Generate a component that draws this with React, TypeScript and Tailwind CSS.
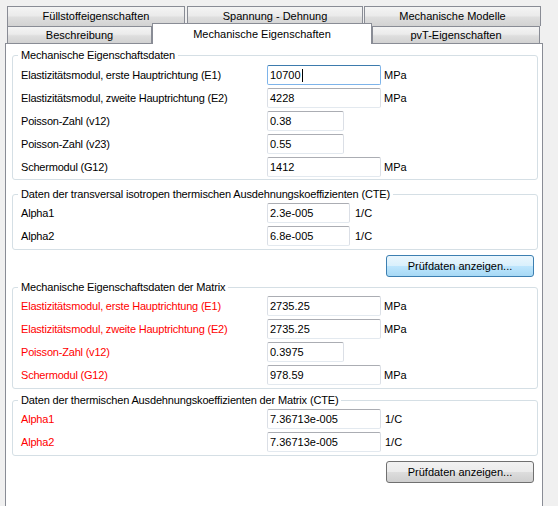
import React from 'react';

const tabBg =
  'bg-[linear-gradient(to_bottom,#f4f4f4,#ebebeb_45%,#dedede_55%,#d2d2d2)]';

function Tab({ label, className }: { label: string; className: string }) {
  return (
    <div
      className={`flex items-center justify-center border border-[#898c95] ${tabBg} ${className}`}
    >
      {label}
    </div>
  );
}

interface RowProps {
  label: string;
  value: string;
  unit?: string;
  inputW: string;
  unitGap?: string;
  red?: boolean;
  focused?: boolean;
}

function Row({ label, value, unit, inputW, unitGap = 'ml-[3px]', red, focused }: RowProps) {
  return (
    <div className="flex h-[20px] items-center">
      <div className={`w-[246px] shrink-0 tracking-[-0.2px] ${red ? 'text-[#ff0000]' : 'text-black'}`}>
        {label}
      </div>
      <div
        className={`flex h-[20px] ${inputW} items-center rounded-[2px] border bg-white pl-[2px] ${
          focused
            ? 'border-[#7eb4ea] border-t-[#3d7bad]'
            : 'border-[#dbdfe6] border-t-[#abadb3] border-b-[#e3e9ef]'
        }`}
      >
        <span>{value}</span>
        {focused && <span className="ml-[1px] h-[13px] w-px bg-black" />}
      </div>
      {unit && <div className={unitGap}>{unit}</div>}
    </div>
  );
}

function Group({
  title,
  children,
  className = '',
  pt = 'pt-[2px]',
  pb = 'pb-[3px]',
}: {
  title: string;
  children: React.ReactNode;
  className?: string;
  pt?: string;
  pb?: string;
}) {
  return (
    <fieldset className={`rounded-[3px] border border-[#d5dfe5] ${className}`}>
      <legend className="ml-[5px] px-[3px] leading-[13px] tracking-[-0.15px]">{title}</legend>
      <div className={`flex flex-col gap-[3px] pl-[8px] ${pb} ${pt}`}>{children}</div>
    </fieldset>
  );
}

function Button({ primary }: { primary?: boolean }) {
  return (
    <div
      className={`mr-[4px] flex h-[22px] w-[148px] items-center justify-center self-end rounded-[3px] border ${
        primary
          ? 'border-[#3c7fb1] bg-[linear-gradient(to_bottom,#eaf6fd,#d9f0fc_50%,#bee6fd_50%,#a7d9f5)]'
          : 'border-[#707070] bg-[linear-gradient(to_bottom,#f2f2f2,#ebebeb_50%,#dddddd_50%,#cfcfcf)]'
      }`}
    >
      Prüfdaten anzeigen...
    </div>
  );
}

export default function App() {
  return (
    <div className="h-[506px] w-[558px] overflow-hidden bg-[#f0f0f0] font-['Liberation_Sans',Arial,sans-serif] text-[11px] text-black">
      {/* tab strip, back row */}
      <div className="mt-[6px] flex h-[20px] pl-[7px]">
        <Tab label="Füllstoffeigenschaften" className="w-[178px] border-b-0" />
        <Tab label="Spannung - Dehnung" className="ml-[2px] w-[176px] border-b-0" />
        <Tab label="Mechanische Modelle" className="ml-[1px] w-[177px] border-b-0" />
      </div>
      {/* tab strip, front row */}
      <div className="flex h-[17px] items-end pl-[7px]">
        <Tab label="Beschreibung" className="h-[17px] w-[145px] border-b-0" />
        <div className="relative z-10 mb-[-1px] flex h-[21px] w-[220px] items-start justify-center border border-b-0 border-[#898c95] bg-white pt-[2px]">
          Mechanische Eigenschaften
        </div>
        <Tab label="pvT-Eigenschaften" className="h-[17px] w-[168px] border-b-0" />
      </div>

      {/* tab page */}
      <div className="ml-[5px] h-[470px] w-[538px] border border-[#898c95] bg-white pl-[6px] pr-[4px] pt-[5px]">
        <div className="flex flex-col">
          <Group title="Mechanische Eigenschaftsdaten" pt="pt-[3px]" pb="pb-[2px]">
            <Row label="Elastizitätsmodul, erste Hauptrichtung (E1)" value="10700" unit="MPa" inputW="w-[114px]" focused />
            <Row label="Elastizitätsmodul, zweite Hauptrichtung (E2)" value="4228" unit="MPa" inputW="w-[114px]" />
            <Row label="Poisson-Zahl (v12)" value="0.38" inputW="w-[77px]" />
            <Row label="Poisson-Zahl (v23)" value="0.55" inputW="w-[77px]" />
            <Row label="Schermodul (G12)" value="1412" unit="MPa" inputW="w-[114px]" />
          </Group>

          <Group title="Daten der transversal isotropen thermischen Ausdehnungskoeffizienten (CTE)" className="mt-[8px]">
            <Row label="Alpha1" value="2.3e-005" unit="1/C" inputW="w-[83px]" unitGap="ml-[5px]" />
            <Row label="Alpha2" value="6.8e-005" unit="1/C" inputW="w-[83px]" unitGap="ml-[5px]" />
          </Group>

          <div className="mt-[5px] flex flex-col">
            <Button primary />
          </div>

          <Group title="Mechanische Eigenschaftsdaten der Matrix" className="mt-[4px]">
            <Row label="Elastizitätsmodul, erste Hauptrichtung (E1)" value="2735.25" unit="MPa" inputW="w-[114px]" red />
            <Row label="Elastizitätsmodul, zweite Hauptrichtung (E2)" value="2735.25" unit="MPa" inputW="w-[114px]" red />
            <Row label="Poisson-Zahl (v12)" value="0.3975" inputW="w-[77px]" red />
            <Row label="Schermodul (G12)" value="978.59" unit="MPa" inputW="w-[114px]" red />
          </Group>

          <Group title="Daten der thermischen Ausdehnungskoeffizienten der Matrix (CTE)" className="mt-[5px]">
            <Row label="Alpha1" value="7.36713e-005" unit="1/C" inputW="w-[114px]" unitGap="ml-[4px]" red />
            <Row label="Alpha2" value="7.36713e-005" unit="1/C" inputW="w-[114px]" unitGap="ml-[4px]" red />
          </Group>

          <div className="mt-[5px] flex flex-col">
            <Button />
          </div>
        </div>
      </div>
    </div>
  );
}
